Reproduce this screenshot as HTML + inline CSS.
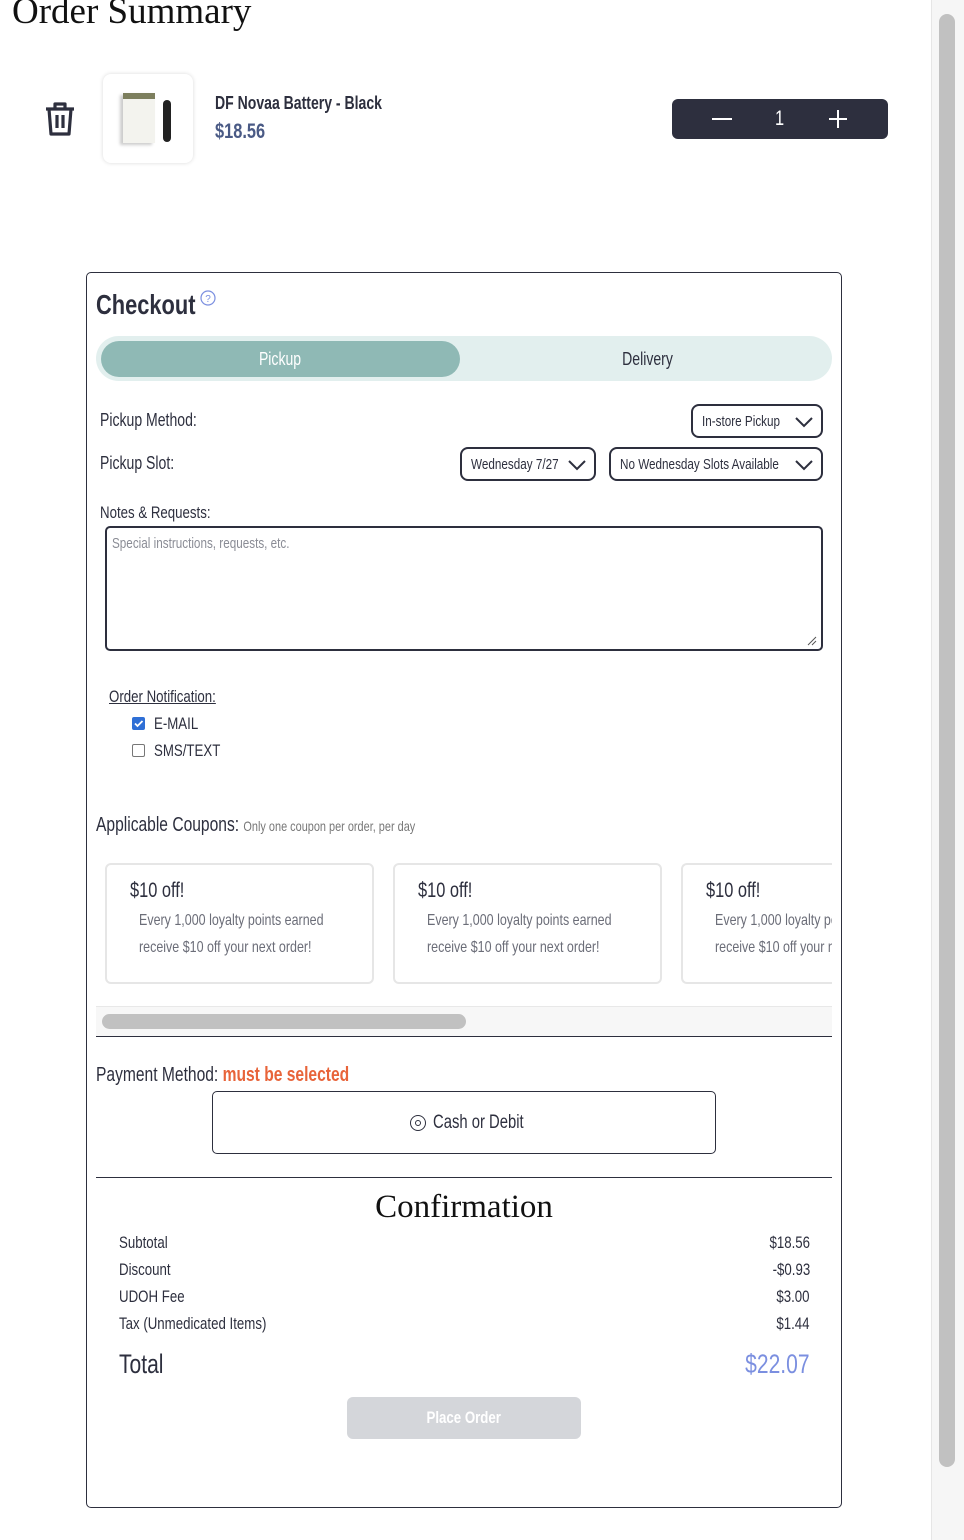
<!DOCTYPE html>
<html><head><meta charset="utf-8"><style>
*{box-sizing:border-box;margin:0;padding:0}
body{width:964px;height:1540px;background:#fff;position:relative;overflow:hidden;font-family:"Liberation Sans",sans-serif;color:#2d2f3e}
.a{position:absolute;white-space:nowrap}
.c{display:inline-block;transform:scaleX(.78);transform-origin:left center;white-space:nowrap}
.cc{transform-origin:center center}
.cr{transform-origin:right center}
.sel{position:absolute;border:2px solid #2d2f3e;border-radius:8px;font-size:15px;padding-left:9px;display:flex;align-items:center;height:34px}
.sel svg{position:absolute;right:8px;top:10px}
.cp{position:absolute;top:863px;width:269px;height:121px;border:2px solid #e6e6e6;border-radius:6px;overflow:hidden}
.cp .t{position:absolute;left:23px;top:14px;font-size:21px;color:#2d2f3e}
.cp .d{position:absolute;left:32px;top:42px;font-size:16px;color:#6b6d78;line-height:27px;white-space:nowrap}
.row{position:absolute;left:119px;width:691px;font-size:17px;display:flex;justify-content:space-between}
</style></head><body>
<div class="a" style="left:12px;top:-10px;font-family:'Liberation Serif',serif;font-size:37px;color:#111">Order Summary</div>
<svg class="a" style="left:44px;top:101px" width="32" height="36" viewBox="0 0 32 36" fill="none" stroke="#2d2f3e" stroke-width="3.2" stroke-linejoin="round"><path d="M2 8h28M11 8V3h10v5M5 8l2 25h18l2-25M13 14v13M19 14v13"/></svg>
<div class="a" style="left:103px;top:74px;width:90px;height:89px;border-radius:8px;box-shadow:0 0 4px rgba(0,0,0,.15);background:#fff">
<div class="a" style="left:20px;top:19px;width:32px;height:50px;background:#f3f3ee;border-top:6px solid #7d7f5e;box-shadow:-3px 2px 3px #ccc"></div>
<div class="a" style="left:60px;top:26px;width:8px;height:42px;background:#222;border-radius:4px"></div></div>
<div class="a" style="left:215px;top:93px;font-size:18px;font-weight:bold;color:#2d2f3e"><span class="c">DF Novaa Battery - Black</span></div>
<div class="a" style="left:215px;top:120px;font-size:21px;font-weight:bold;color:#4a5a85"><span class="c">$18.56</span></div>
<div class="a" style="left:672px;top:99px;width:216px;height:40px;background:#2d2f3e;border-radius:6px;color:#fff">
<div class="a" style="left:40px;top:19px;width:20px;height:2px;background:#fff"></div>
<div class="a" style="left:103px;top:8px;font-size:21px"><span class="c">1</span></div>
<div class="a" style="left:157px;top:19px;width:18px;height:2px;background:#fff"></div>
<div class="a" style="left:165px;top:11px;width:2px;height:18px;background:#fff"></div></div>

<div class="a" style="left:931px;top:0;width:33px;height:1540px;background:#f6f6f6;border-left:1px solid #e6e6e6"></div>
<div class="a" style="left:939px;top:14px;width:16px;height:1453px;background:#c1c1c1;border-radius:8px"></div>

<div class="a" style="left:86px;top:272px;width:756px;height:1236px;border:1.5px solid #2d2f3e;border-radius:5px"></div>
<div class="a" style="left:96px;top:289px;font-size:28px;font-weight:bold"><span class="c">Checkout</span></div>
<svg class="a" style="left:200px;top:290px" width="16" height="16"><circle cx="8" cy="8" r="7" fill="none" stroke="#7b8fe0" stroke-width="1.2"/><text x="8" y="12" font-size="10" text-anchor="middle" fill="#7b8fe0" font-family="Liberation Sans">?</text></svg>
<div class="a" style="left:96px;top:336px;width:736px;height:45px;background:#e2efee;border-radius:23px"></div>
<div class="a" style="left:101px;top:341px;width:359px;height:36px;background:#8fb9b5;border-radius:18px;color:#fff;font-size:18px;text-align:center;line-height:36px"><span class="c cc">Pickup</span></div>
<div class="a" style="left:460px;top:341px;width:376px;font-size:18px;text-align:center;line-height:36px"><span class="c cc">Delivery</span></div>
<div class="a" style="left:100px;top:410px;font-size:18px"><span class="c">Pickup Method:</span></div>
<div class="a" style="left:100px;top:453px;font-size:18px"><span class="c">Pickup Slot:</span></div>
<div class="sel" style="left:691px;top:404px;width:132px"><span class="c">In-store Pickup</span><svg width="18" height="12"><path d="M1 2l8 8 8-8" fill="none" stroke="#2d2f3e" stroke-width="2"/></svg></div>
<div class="sel" style="left:460px;top:447px;width:136px"><span class="c">Wednesday 7/27</span><svg width="18" height="12"><path d="M1 2l8 8 8-8" fill="none" stroke="#2d2f3e" stroke-width="2"/></svg></div>
<div class="sel" style="left:609px;top:447px;width:214px"><span class="c">No Wednesday Slots Available</span><svg width="18" height="12"><path d="M1 2l8 8 8-8" fill="none" stroke="#2d2f3e" stroke-width="2"/></svg></div>
<div class="a" style="left:100px;top:503px;font-size:17px"><span class="c">Notes &amp; Requests:</span></div>
<div class="a" style="left:105px;top:526px;width:718px;height:125px;border:2px solid #2d2f3e;border-radius:5px;font-size:15px;color:#8a8c95;padding:7px 5px"><span class="c">Special instructions, requests, etc.</span></div>
<svg class="a" style="left:805px;top:634px" width="12" height="12"><path d="M11 3L3 11M11 7L7 11" stroke="#555" stroke-width="1"/></svg>
<div class="a" style="left:109px;top:687px;font-size:17px"><span class="c" style="text-decoration:underline">Order Notification:</span></div>
<div class="a" style="left:132px;top:717px;width:13px;height:13px;background:#2f6fd6;border-radius:2px"></div>
<svg class="a" style="left:133px;top:718px" width="11" height="11"><path d="M2 5.5l2.5 2.5 5-5" stroke="#fff" stroke-width="1.8" fill="none"/></svg>
<div class="a" style="left:154px;top:714px;font-size:17px"><span class="c">E-MAIL</span></div>
<div class="a" style="left:132px;top:744px;width:13px;height:13px;border:1px solid #777;border-radius:2px"></div>
<div class="a" style="left:154px;top:741px;font-size:17px"><span class="c">SMS/TEXT</span></div>
<div class="a" style="left:96px;top:814px;font-size:20px"><span class="c">Applicable Coupons: <span style="font-size:14px;color:#777">Only one coupon per order, per day</span></span></div>
<div class="cp" style="left:105px"><div class="t"><span class="c">$10 off!</span></div><div class="d"><span class="c">Every 1,000 loyalty points earned<br>receive $10 off your next order!</span></div></div>
<div class="cp" style="left:393px"><div class="t"><span class="c">$10 off!</span></div><div class="d"><span class="c">Every 1,000 loyalty points earned<br>receive $10 off your next order!</span></div></div>
<div class="cp" style="left:681px;width:151px;border-right:none;border-radius:6px 0 0 6px"><div class="t"><span class="c">$10 off!</span></div><div class="d"><span class="c">Every 1,000 loyalty points earned<br>receive $10 off your next order!</span></div></div>
<div class="a" style="left:96px;top:1006px;width:736px;height:30px;background:#f7f7f7;border-top:1px solid #e8e8e8"></div>
<div class="a" style="left:102px;top:1014px;width:364px;height:15px;background:#c1c1c1;border-radius:8px"></div>
<div class="a" style="left:96px;top:1036px;width:736px;height:1px;background:#2d2f3e"></div>
<div class="a" style="left:96px;top:1064px;font-size:20px"><span class="c">Payment Method: <b style="color:#e8643a">must be selected</b></span></div>
<div class="a" style="left:212px;top:1091px;width:504px;height:63px;border:1.5px solid #2d2f3e;border-radius:5px"></div>
<div class="a" style="left:410px;top:1115px;width:16px;height:16px;border:1.5px solid #2d2f3e;border-radius:50%"><span style="position:absolute;left:3.5px;top:3.5px;width:6px;height:6px;border:1.3px solid #2d2f3e;border-radius:50%"></span></div>
<div class="a" style="left:433px;top:1112px;font-size:19px"><span class="c">Cash or Debit</span></div>
<div class="a" style="left:96px;top:1177px;width:736px;height:1px;background:#2d2f3e"></div>
<div class="a" style="left:96px;top:1189px;width:736px;text-align:center;font-family:'Liberation Serif',serif;font-size:33px;color:#111">Confirmation</div>
<div class="row" style="top:1233px"><span class="c">Subtotal</span><span class="c cr">$18.56</span></div>
<div class="row" style="top:1260px"><span class="c">Discount</span><span class="c cr">-$0.93</span></div>
<div class="row" style="top:1287px"><span class="c">UDOH Fee</span><span class="c cr">$3.00</span></div>
<div class="row" style="top:1314px"><span class="c">Tax (Unmedicated Items)</span><span class="c cr">$1.44</span></div>
<div class="row" style="top:1349px;font-size:27px"><span class="c">Total</span><span class="c cr" style="color:#7b8fe0">$22.07</span></div>
<div class="a" style="left:347px;top:1397px;width:234px;height:42px;background:#d4d6da;border-radius:6px;color:#fff;font-weight:bold;font-size:17px;text-align:center;line-height:42px"><span class="c cc">Place Order</span></div>
</body></html>
